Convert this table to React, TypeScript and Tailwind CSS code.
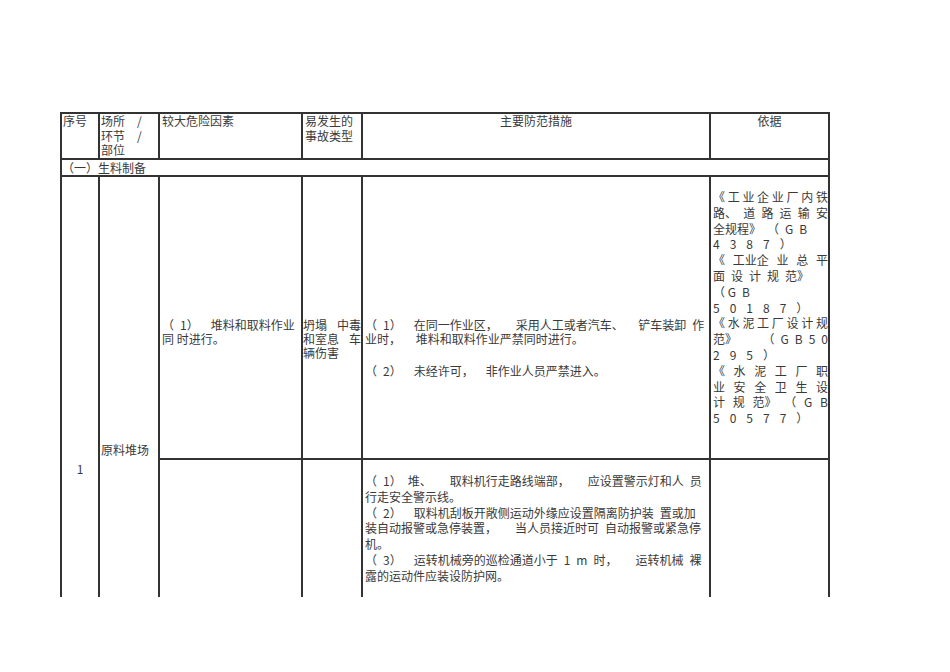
import React from "react";

const E = "\u2002";

function Spread({ tokens }: { tokens: string[] }) {
  return (
    <div className="flex justify-between whitespace-nowrap">
      {tokens.map((t, i) => (
        <span key={i}>{t}</span>
      ))}
    </div>
  );
}

function Line({ children, className = "" }: { children: React.ReactNode; className?: string }) {
  return <div className={"whitespace-pre " + className}>{children}</div>;
}

function Digits({ d, tail = "）" }: { d: string; tail?: string }) {
  return (
    <div className="whitespace-nowrap">
      <span className="tracking-[10px]">{d}</span>
      {tail}
    </div>
  );
}

export default function App() {
  return (
    <div className="min-h-screen bg-white pt-[112px] pl-[60px] font-['Noto_Sans_CJK_SC',sans-serif] text-[12px] text-[#3a3a3a]">
      <div className="h-[485px] w-[770px] overflow-hidden">
        <div className="grid grid-cols-[36px_58px_141px_58px_346px_117px] grid-rows-[44px_15px_281px_400px] gap-[2px] bg-[#333] p-[2px]">
          {/* header */}
          <div className="bg-white pl-[1px] leading-[14.5px]">序号</div>
          <div className="bg-white pl-[1px] leading-[14.5px]">
            <Line>{"场所　/"}</Line>
            <Line>{"环节　/"}</Line>
            <Line>部位</Line>
          </div>
          <div className="bg-white pl-[2px] leading-[14.5px]">较大危险因素</div>
          <div className="bg-white pl-[2px] leading-[14.5px]">
            <div>易发生的</div>
            <div>事故类型</div>
          </div>
          <div className="bg-white text-center leading-[14.5px]">主要防范措施</div>
          <div className="bg-white text-center leading-[14.5px]">依据</div>

          {/* section */}
          <div className="col-span-6 bg-white leading-[15px]">（一）生料制备</div>

          {/* row 1 */}
          <div className="row-span-2 bg-white pt-[284px] text-center leading-[15px]">1</div>
          <div className="row-span-2 bg-white pl-[1px] pt-[265px] leading-[15px]">原料堆场</div>
          <div className="bg-white pl-[2px] pt-[141px] leading-[14px]">
            <Line>{`（${E}1）${E}${E}堆料和取料作业`}</Line>
            <Line>{"同 时进行。"}</Line>
          </div>
          <div className="bg-white pt-[141px] leading-[14px]">
            <Spread tokens={["坍塌", "中毒"]} />
            <Spread tokens={["和室息", "车"]} />
            <div>辆伤害</div>
          </div>
          <div className="bg-white pl-[2px] pt-[141px] leading-[14px]">
            <Line>{`（${E}1）${E}${E}在同一作业区，${E}${E}${E}采用人工或者汽车、${E}${E} 铲车装卸${E}作`}</Line>
            <Line>{`业时，${E}${E} 堆料和取料作业严禁同时进行。`}</Line>
            <Line className="mt-[18px]">{`（${E}2）${E}${E}未经许可，${E}${E}非作业人员严禁进入。`}</Line>
          </div>
          <div className="bg-white pl-[2px] pt-[12px] leading-[15.8px]">
            <Spread tokens={["《", "工", "业", "企", "业", "厂", "内", "铁"]} />
            <Spread tokens={["路、", "道", "路", "运", "输", "安"]} />
            <Line>{`全规程》${E}（${E}G${E}B`}</Line>
            <Digits d="4387" />
            <Spread tokens={["《", "工业企", "业", "总", "平"]} />
            <Line>{`面${E}设${E}计${E}规${E}范》`}</Line>
            <Line>{`（ G${E}B`}</Line>
            <Digits d="50187" />
            <Spread tokens={["《", "水", "泥", "工", "厂", "设", "计", "规"]} />
            <div className="flex justify-between whitespace-pre">
              <span>范》</span>
              <span>{`（${E}G${E}B${E}5${E}0`}</span>
            </div>
            <Digits d="295" />
            <Spread tokens={["《", "水", "泥", "工", "厂", "职"]} />
            <Spread tokens={["业", "安", "全", "卫", "生", "设"]} />
            <Spread tokens={["计", "规", "范》", "（", "G", "B"]} />
            <Digits d="50577" />
          </div>

          {/* row 2 */}
          <div className="bg-white" />
          <div className="bg-white" />
          <div className="bg-white pl-[2px] pt-[13px] leading-[15.8px]">
            <Line>{`（${E}1）${E}堆、${E}${E}${E}取料机行走路线端部，${E}${E}${E}应设置警示灯和人${E}员`}</Line>
            <Line>行走安全警示线。</Line>
            <Line>{`（${E}2）${E}${E}取料机刮板开敞侧运动外缘应设置隔离防护装${E}置或加`}</Line>
            <Line>{`装自动报警或急停装置，${E}${E}${E}当人员接近时可${E}自动报警或紧急停`}</Line>
            <Line>机。</Line>
            <Line>{`（${E}3）${E}${E}运转机械旁的巡检通道小于${E}1${E}m${E}时，${E}${E}${E}运转机械${E}裸`}</Line>
            <Line>露的运动件应装设防护网。</Line>
          </div>
          <div className="bg-white" />
        </div>
      </div>
    </div>
  );
}
